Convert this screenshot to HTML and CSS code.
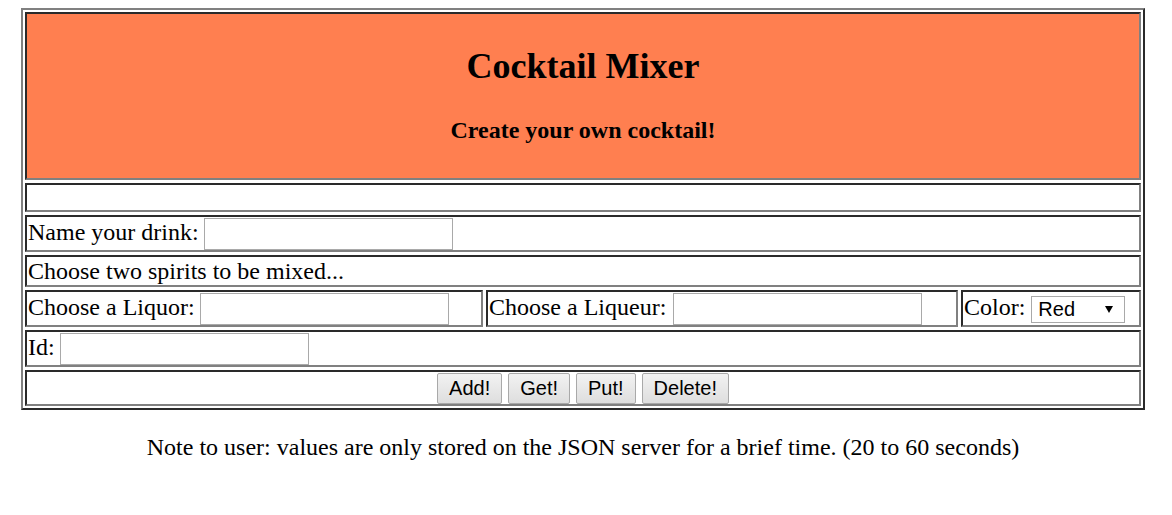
FILE: index.html
```html
<!DOCTYPE html>
<html lang="en">
<head>
<meta charset="utf-8">
<title>Cocktail Mixer</title>
<link rel="stylesheet" href="styles.css">
</head>
<body>
<div class="frame">
  <div class="cell header">
    <h1 class="title">Cocktail Mixer</h1>
    <h3 class="subtitle">Create your own cocktail!</h3>
  </div>
  <div class="cell blank"></div>
  <div class="cell line name-row">Name your drink: <input class="field" type="text"></div>
  <div class="cell line choose-row">Choose two spirits to be mixed...</div>
  <div class="split">
    <div class="cell line">Choose a Liquor: <input class="field" type="text"></div>
    <div class="cell line">Choose a Liqueur: <input class="field field-wide" type="text"></div>
    <div class="cell line color-cell">Color: <span class="picker"><select class="select"><option>Red</option><option>Blue</option><option>Green</option></select><svg class="arrow" width="8" height="7" viewBox="0 0 8 7"><polygon points="0,0 8,0 4,7" fill="#000"/></svg></span></div>
  </div>
  <div class="cell line id-row">Id: <input class="field" type="text"></div>
  <div class="cell actions">
    <button class="btn">Add!</button>
    <button class="btn">Get!</button>
    <button class="btn">Put!</button>
    <button class="btn">Delete!</button>
  </div>
</div>
<p class="note">Note to user: values are only stored on the JSON server for a brief time. (20 to 60 seconds)</p>
</body>
</html>
```

FILE: styles.css
```css
html, body {
  background: #ffffff;
}
body {
  margin: 8px;
  font-family: "Liberation Serif", "Times New Roman", serif;
  font-size: 24px;
  color: #000;
}
.frame {
  box-sizing: border-box;
  width: 1124px;
  margin-left: 13px;
  padding: 2px;
  border: 2px solid;
  border-color: #808080 #2a2a2a #2a2a2a #808080;
  display: flex;
  flex-direction: column;
  gap: 3px;
}
.cell {
  box-sizing: border-box;
  padding: 1px;
  border: 2px solid;
  border-color: #2a2a2a #808080 #808080 #2a2a2a;
  white-space: nowrap;
}
.header {
  height: 168px;
  background: #ff7f50;
  text-align: center;
}
.title {
  margin: 30px 0 0;
  font-size: 36px;
  font-weight: bold;
}
.subtitle {
  margin: 30px 0 0;
  font-size: 24px;
  font-weight: bold;
}
.blank {
  height: 29px;
}
.name-row {
  height: 37px;
}
.choose-row {
  height: 32px;
}
.id-row {
  height: 37px;
}
.split {
  display: grid;
  grid-template-columns: 458px 472px 180px;
  gap: 3px;
  height: 37px;
}
.split .cell {
  height: 37px;
}
.color-cell {
  padding-top: 2px;
}
.field {
  box-sizing: border-box;
  width: 249px;
  height: 32px;
  margin: 0 0 0 -1px;
  padding: 1px 2px;
  border: 1px solid #a9a9a9;
  background: #fff;
  font-family: "Liberation Sans", Arial, sans-serif;
  font-size: 20px;
  vertical-align: middle;
}
.field-wide {
  margin-left: 1px;
}
.picker {
  position: relative;
  display: inline-block;
  vertical-align: middle;
  height: 27px;
}
.select {
  box-sizing: border-box;
  width: 94px;
  height: 27px;
  margin: 0;
  padding: 0 0 0 6px;
  border: 1px solid #a9a9a9;
  border-radius: 0;
  background: #fff;
  color: #000;
  font-family: "Liberation Sans", Arial, sans-serif;
  font-size: 20px;
  appearance: none;
  -webkit-appearance: none;
  display: block;
}
.arrow {
  position: absolute;
  right: 12px;
  top: 10px;
  pointer-events: none;
}
.actions {
  height: 36px;
  display: flex;
  justify-content: center;
  align-items: flex-start;
  gap: 6px;
}
.btn {
  box-sizing: border-box;
  height: 31px;
  margin: 0;
  padding: 3px 11px;
  border: 1px solid #a9a9a9;
  border-radius: 2px;
  background: linear-gradient(#f2f2f2, #dedede);
  color: #000;
  font-family: "Liberation Sans", Arial, sans-serif;
  font-size: 20px;
  line-height: 23px;
}
.note {
  margin: 24px 0 0;
  width: 1150px;
  text-align: center;
}
```
